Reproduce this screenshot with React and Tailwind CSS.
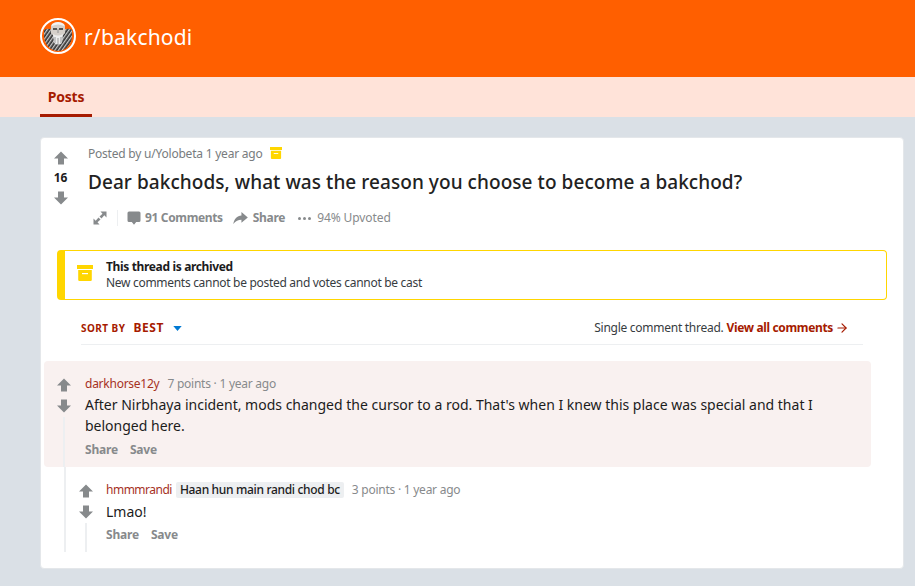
import React from 'react';
import { ArrowRight } from 'lucide-react';

const plex = { fontFamily: '"Noto Sans", sans-serif' };

const UpArrow = ({ className }) => (
    <svg viewBox="0 0 14 14" className={className} fill="#878a8c">
        <path d="M7 0.5 L14 7.5 H10 V13.5 H4 V7.5 H0 Z" />
    </svg>
);

const DownArrow = ({ className }) => (
    <svg viewBox="0 0 14 14" className={className} fill="#878a8c">
        <path d="M7 13.5 L14 6.5 H10 V0.5 H4 V6.5 H0 Z" />
    </svg>
);

const ArchiveIcon = ({ className }) => (
    <svg viewBox="0 0 16 16" className={className} fill="#ffd600">
        <rect x="0" y="0" width="16" height="4" />
        <path d="M1.2 5 H14.8 V14.8 a1.2 1.2 0 0 1 -1.2 1.2 H2.4 a1.2 1.2 0 0 1 -1.2 -1.2 Z" />
        <rect x="5" y="8" width="6" height="1.2" fill="#fff" />
    </svg>
);

const Avatar = () => (
    <svg viewBox="0 0 36 36" className="w-9 h-9 shrink-0">
        <defs>
            <pattern id="beard" width="3" height="3" patternUnits="userSpaceOnUse" patternTransform="rotate(35)">
                <rect width="3" height="3" fill="#333333" />
                <rect width="1.3" height="3" fill="#c9c9c9" />
            </pattern>
        </defs>
        <circle cx="18" cy="18" r="17" fill="#ff5f00" stroke="#fff" strokeWidth="2" />
        <path d="M4 12 Q8 9.5 12 12 L24 12 Q28 9.5 32 12 L32 19 Q31 27 25 31 Q18 35 11 31 Q5 27 4 19 Z" fill="url(#beard)" />
        <path d="M11 7 Q18 1 25 7 L25 15 Q18 24 11 15 Z" fill="#d6d0ca" />
        <path d="M12 6 Q18 2 24 6 L24 8 Q18 5 12 8 Z" fill="#f2f2f2" />
        <path d="M13 11 H17 M19 11 H23" stroke="#2b2b2b" strokeWidth="1.3" />
        <path d="M18 11 V15" stroke="#8a8a8a" strokeWidth="0.9" />
        <path d="M13 16 Q18 19 23 16 L22 25 Q18 28 14 25 Z" fill="#ededed" />
        <path d="M15 19 V25 M18 20 V27 M21 19 V25" stroke="#777" strokeWidth="0.7" />
    </svg>
);

const CommentActions = () => (
    <div className="flex gap-[12px] text-xs font-bold text-[#878a8c] leading-4 tracking-[-0.2px]">
        <span>Share</span>
        <span>Save</span>
    </div>
);

const App = () => {
    return (
        <div className="w-[915px] h-[586px] overflow-hidden bg-[#dae0e6]" style={plex}>
            <div className="h-[77px] bg-[#ff5f00] flex items-center pl-[40px] gap-[8px] pb-[5px]">
                <Avatar />
                <span className="text-[21px] text-white tracking-[0.2px] mt-[3px]">r/bakchodi</span>
            </div>
            <div className="h-[40px] bg-[#ffe3d9] pl-[40px]">
                <div className="w-[52px] h-[40px] border-b-[3px] border-[#a61b00] flex items-center justify-center text-[#a61b00] text-sm font-bold tracking-[-0.2px] pt-[3px]">
                    Posts
                </div>
            </div>

            <div className="ml-[40px] mt-[20px] mr-[11px] h-[432px] bg-white rounded-[4px] border border-[#e4e7ea] flex flex-col">
                <div className="flex h-[100px]">
                    <div className="w-[39px] flex flex-col items-center pt-[13px] shrink-0">
                        <UpArrow className="w-[14px] h-[14px]" />
                        <span className="text-xs font-bold text-[#1c1c1c] mt-[5px] leading-4">16</span>
                        <DownArrow className="w-[14px] h-[14px] mt-[5px]" />
                    </div>
                    <div className="pl-[8px] pt-[8px]">
                        <div className="flex items-center gap-[7px] text-xs text-[#787c7e] leading-4 tracking-[-0.22px]">
                            <span>Posted by u/Yolobeta 1 year ago</span>
                            <ArchiveIcon className="w-[12px] h-[12px] -mt-[2px]" />
                        </div>
                        <h1 className="text-[19px] font-medium text-[#222222] leading-[22px] mt-[9px] tracking-[0.06px]">
                            Dear bakchods, what was the reason you choose to become a bakchod?
                        </h1>
                        <div className="flex items-center mt-[16px] h-[18px] text-xs text-[#878a8c]">
                            <svg viewBox="0 0 14 14" className="w-[14px] h-[14px] ml-[5px]" fill="#878a8c">
                                <path d="M7.5 0.5 H13.5 V6.5 L11.3 4.3 L8.5 7.5 L6.5 5.5 L9.5 2.7 Z" />
                                <path d="M6.5 13.5 H0.5 V7.5 L2.7 9.7 L5.5 6.5 L7.5 8.5 L4.5 11.3 Z" />
                            </svg>
                            <span className="w-px h-[16px] bg-[#edeff1] ml-[10px]"></span>
                            <svg viewBox="0 0 14 14" className="w-[14px] h-[14px] ml-[9px]" fill="#878a8c">
                                <path d="M2 0.5 H12 a1.5 1.5 0 0 1 1.5 1.5 V9.5 a1.5 1.5 0 0 1 -1.5 1.5 H9.2 L7 13.8 L4.8 11 H2 a1.5 1.5 0 0 1 -1.5 -1.5 V2 A1.5 1.5 0 0 1 2 0.5 Z" />
                            </svg>
                            <span className="font-bold ml-[4px] tracking-[-0.35px]">91 Comments</span>
                            <svg viewBox="0 0 16 14" className="w-[15px] h-[14px] ml-[10px]" fill="#878a8c">
                                <path d="M9 0.5 L15.8 6.5 L9 12 V8.8 C5.5 8.8 3 9.8 0.3 13.5 C1 8 4.5 4.5 9 4.2 Z" />
                            </svg>
                            <span className="font-bold ml-[5px] tracking-[-0.3px]">Share</span>
                            <span className="flex gap-[2px] ml-[13px]">
                                <span className="w-[3px] h-[3px] rounded-full bg-[#878a8c]"></span>
                                <span className="w-[3px] h-[3px] rounded-full bg-[#878a8c]"></span>
                                <span className="w-[3px] h-[3px] rounded-full bg-[#878a8c]"></span>
                            </span>
                            <span className="ml-[6px] -mt-[1px] tracking-[-0.1px]">94% Upvoted</span>
                        </div>
                    </div>
                </div>

                <div className="mx-[16px] mt-[12px] h-[50px] flex rounded-[4px] border border-[#ffd600] border-l-[8px] items-center">
                    <ArchiveIcon className="w-[16px] h-[16px] ml-[12px] mb-[4px] shrink-0" />
                    <div className="ml-[13px] text-xs leading-[16px] text-[#1c1c1c]">
                        <div className="font-bold tracking-[-0.35px]">This thread is archived</div>
                        <div className="text-[#373c3f] tracking-[-0.3px]">New comments cannot be posted and votes cannot be cast</div>
                    </div>
                </div>

                <div className="mx-[40px] mt-[16px] h-[29px] border-b border-[#edeff1] flex items-start justify-between pt-[2px]">
                    <div className="flex items-center h-[20px]">
                        <span className="text-[10px] font-bold text-[#a61b00] tracking-[0.45px]">SORT BY</span>
                        <span className="text-xs font-bold text-[#a61b00] tracking-[0.6px] ml-[8px]">BEST</span>
                        <svg viewBox="0 0 10 6" className="w-[9px] h-[5px] ml-[9px] mt-[1px]" fill="#0079d3">
                            <path d="M0 0 H10 L5 6 Z" />
                        </svg>
                    </div>
                    <div className="flex items-center h-[20px] text-xs mr-[14px]">
                        <span className="text-[#373c3f] tracking-[-0.27px]">Single comment thread.</span>
                        <span className="font-bold text-[#a61b00] ml-[3px] tracking-[-0.35px]">View all comments</span>
                        <ArrowRight className="w-[14px] h-[14px] text-[#a61b00] ml-[2px]" strokeWidth={2} />
                    </div>
                </div>

                <div className="ml-[3px] mr-[32px] mt-[16px] h-[106px] bg-[#f9f1f0] rounded-[4px] flex">
                    <div className="w-[40px] flex flex-col items-center pt-[17px] shrink-0">
                        <UpArrow className="w-[14px] h-[14px]" />
                        <DownArrow className="w-[14px] h-[14px] mt-[7px]" />
                        <span className="w-[2px] flex-1 bg-[#edeff1] mt-[4px]"></span>
                    </div>
                    <div className="pt-[15px] pl-[1px]">
                        <div className="text-xs leading-[16px]">
                            <span className="text-[#a6321f] tracking-[-0.25px]">darkhorse12y</span>
                            <span className="text-[#878a8c] ml-[8px] tracking-[-0.25px]">7 points · 1 year ago</span>
                        </div>
                        <p className="text-sm leading-[21px] text-[#1c1c1c] mt-[2px] w-[760px]">
                            After Nirbhaya incident, mods changed the cursor to a rod. That's when I knew this place was special and that I belonged here.
                        </p>
                        <div className="mt-[6px]">
                            <CommentActions />
                        </div>
                    </div>
                </div>

                <div className="flex ml-[23px] h-[85px]">
                    <span className="w-[2px] bg-[#edeff1] shrink-0"></span>
                    <div className="w-[40px] flex flex-col items-center shrink-0 pt-[17px] pr-[1px]">
                        <UpArrow className="w-[14px] h-[14px]" />
                        <DownArrow className="w-[14px] h-[14px] mt-[7px]" />
                        <span className="w-[2px] flex-1 bg-[#edeff1] mt-[4px]"></span>
                    </div>
                    <div className="pt-[15px]">
                        <div className="flex items-center text-xs leading-[16px]">
                            <span className="text-[#a6321f] tracking-[-0.5px]">hmmmrandi</span>
                            <span className="bg-[#edeff1] text-[#1c1c1c] rounded-[2px] px-[4px] ml-[4px] font-medium tracking-[-0.33px]">Haan hun main randi chod bc</span>
                            <span className="text-[#878a8c] ml-[8px] tracking-[-0.25px]">3 points · 1 year ago</span>
                        </div>
                        <p className="text-sm leading-[21px] text-[#1c1c1c] mt-[3px]">Lmao!</p>
                        <div className="mt-[5px]">
                            <CommentActions />
                        </div>
                    </div>
                </div>
            </div>
        </div>
    );
};

export default App;
